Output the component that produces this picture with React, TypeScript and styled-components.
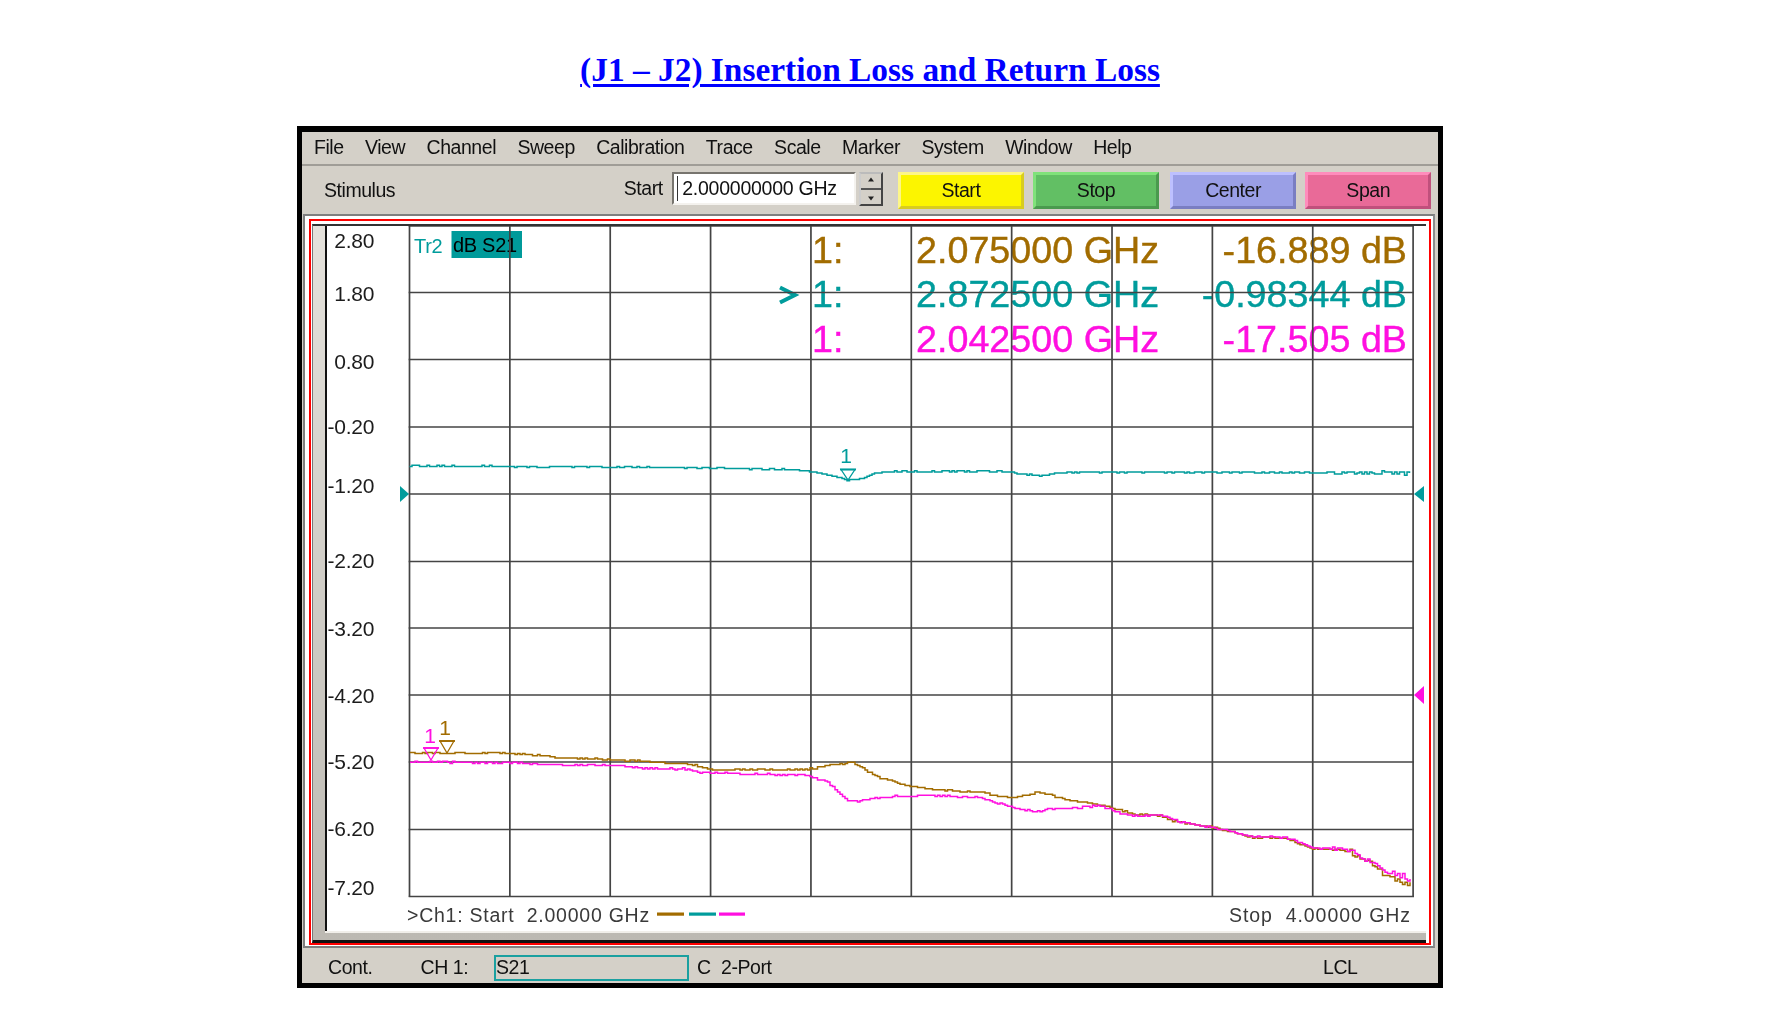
import styled, { createGlobalStyle } from 'styled-components';

const GlobalStyle = createGlobalStyle`
  html, body {
    margin: 0;
    padding: 0;
    background: #fff;
  }
  body {
    font-family: 'Liberation Sans', Arial, sans-serif;
  }
`;

const BROWN = '#a26c00';
const TEAL = '#009c9c';
const PINK = '#ff0fe0';
const BEIGE = '#d4d0c8';

const Page = styled.div`
  width: 1789px;
  height: 1017px;
  overflow: hidden;
`;

const TitleRow = styled.div`
  height: 126px;
  box-sizing: border-box;
  padding: 50px 0 0 297px;
  width: 1443px;
  text-align: center;
`;

const TitleLink = styled.a`
  font-family: 'Liberation Serif', 'Times New Roman', serif;
  font-weight: bold;
  font-size: 33.4px;
  line-height: 40px;
  color: #0000ff;
  text-decoration: underline;
  text-decoration-thickness: 3px;
  text-underline-offset: 3px;
`;

const Frame = styled.div`
  margin-left: 297px;
  width: 1146px;
  height: 862px;
  box-sizing: border-box;
  border: solid #000;
  border-width: 6px 5.5px 5.5px 5px;
  background: ${BEIGE};
  display: flex;
  flex-direction: column;
  color: #111;
  font-size: 19.5px;
  letter-spacing: -0.45px;
  filter: blur(0.35px);
`;

const MenuBar = styled.div`
  height: 34px;
  flex: none;
  box-sizing: border-box;
  border-bottom: 2px solid #a09d97;
  display: flex;
  align-items: center;
  gap: 21.4px;
  padding: 0 0 2px 12px;
`;

const MenuItem = styled.span`
  line-height: 20px;
`;

const ToolBar = styled.div`
  height: 48px;
  flex: none;
  display: flex;
  align-items: center;
  padding: 0 7px 0 22px;
`;

const StimulusLabel = styled.span`
  width: 300px;
`;

const StartLabel = styled.span`
  width: 48px;
  margin-bottom: 4px;
`;

const SpinInput = styled.div`
  width: 184px;
  height: 33px;
  box-sizing: border-box;
  background: #fff;
  border: 2px solid;
  border-color: #77746e #f4f2ee #f4f2ee #77746e;
  margin-bottom: 3px;
  padding-left: 3px;
  display: flex;
  align-items: center;
  letter-spacing: -0.25px;
`;

const CaretBar = styled.span`
  width: 1.5px;
  height: 25px;
  background: #333;
  margin-right: 4px;
`;

const Spinner = styled.div`
  width: 24px;
  height: 34px;
  margin: 0 15.5px 2px 3px;
  box-sizing: border-box;
  border: 2px solid #444;
  border-top-color: #bbb;
  border-left-color: #ccc;
  background: ${BEIGE};
  display: flex;
  flex-direction: column;
  align-items: center;
  justify-content: space-around;
`;

const SpinDivider = styled.span`
  height: 1.5px;
  width: 100%;
  background: #555;
`;

const SoftKeys = styled.div`
  display: flex;
  gap: 9.5px;
`;

const softKeyTones = {
  yellow: { face: '#fcf500', hi: '#fdf688', lo: '#d8cc20' },
  green: { face: '#62bf64', hi: '#80e27a', lo: '#4a9a4e' },
  blue: { face: '#9a9fe6', hi: '#bdc0ff', lo: '#7a7ec2' },
  pink: { face: '#e96a98', hi: '#ff8cbc', lo: '#c0507c' },
};

const SoftKey = styled.div<{ $tone: keyof typeof softKeyTones; $extra?: number }>`
  width: 125.6px;
  height: 37px;
  box-sizing: border-box;
  margin-left: ${(p) => p.$extra ?? 0}px;
  display: flex;
  align-items: center;
  justify-content: center;
  background: ${(p) => softKeyTones[p.$tone].face};
  border: 3px solid;
  border-color: ${(p) => softKeyTones[p.$tone].hi} ${(p) => softKeyTones[p.$tone].lo}
    ${(p) => softKeyTones[p.$tone].lo} ${(p) => softKeyTones[p.$tone].hi};
`;

// the nested frames round the trace window: grey bevel, red active line, beige band
const PlotBevel = styled.div`
  flex: 1;
  margin: 0 3px 1px 1px;
  box-sizing: border-box;
  border: 2px solid #7f7f7f;
  border-right-color: #8c8c8c;
  background: #fff;
  padding: 3px 2px 1px 4px;
  display: flex;
`;

const ActiveLine = styled.div`
  flex: 1;
  box-sizing: border-box;
  border: 2px solid #f00;
  border-left-width: 2.5px;
  padding: 3px 3px 0 1px;
  display: flex;
`;

const WindowBand = styled.div`
  flex: 1;
  box-sizing: border-box;
  border-top: 2px solid #333;
  border-bottom: 3px solid #111;
  border-left: 1px solid #777;
  background: linear-gradient(#e4e1db, #bcb9b2);
  padding: 0 0 9px 11.5px;
  display: flex;
`;

const PlotArea = styled.div`
  flex: 1;
  border-left: 2px solid #111;
  background: #fff;
  box-shadow: 0 2px 0 #f1efea;
  line-height: 0;
`;

const StatusBar = styled.div`
  height: 34px;
  flex: none;
  box-sizing: border-box;
  display: flex;
  align-items: center;
  padding: 3px 0 0 26px;
`;

const StatusText = styled.span<{ $width: number }>`
  width: ${(p) => p.$width}px;
  flex: none;
`;

const ParamBox = styled.div`
  width: 195px;
  height: 26px;
  flex: none;
  box-sizing: border-box;
  border: 2px solid #1aa0a0;
  margin-right: 8px;
  display: flex;
  align-items: center;
`;

const AxisText = styled.text`
  font-size: 21px;
  letter-spacing: -0.2px;
  fill: #1c1c1c;
  text-anchor: end;
`;

const TrLabel = styled.text`
  font-size: 20px;
  letter-spacing: -0.3px;
  fill: ${TEAL};
`;

const TrHighlight = styled.text`
  font-size: 20px;
  letter-spacing: -0.3px;
  fill: #000;
`;

const Readout = styled.text<{ $color: string; $end?: boolean }>`
  font-size: 37.7px;
  letter-spacing: 0;
  fill: ${(p) => p.$color};
  stroke: ${(p) => p.$color};
  stroke-width: 0.4px;
  text-anchor: ${(p) => (p.$end ? 'end' : 'start')};
`;

const FootText = styled.text<{ $end?: boolean }>`
  font-size: 19.5px;
  letter-spacing: ${(p) => (p.$end ? 0.95 : 0.75)}px;
  white-space: pre;
  fill: #3a3a3a;
  text-anchor: ${(p) => (p.$end ? 'end' : 'start')};
`;

const MarkerDigit = styled.text<{ $color: string }>`
  font-size: 21px;
  letter-spacing: 0;
  fill: ${(p) => p.$color};
  text-anchor: middle;
`;

type Pt = [number, number];

const tealPts: Pt[] = [
  [409.5, 466], [576, 466.7], [697.5, 467.7], [792, 469.7], [812, 471.7], [833, 476], [846, 480],
  [860, 479], [873, 474], [887, 471.3], [1002, 471.3], [1025, 474.3], [1042, 475.7], [1059, 473.3],
  [1076, 472], [1211, 472.3], [1411, 473],
];

const brownPts: Pt[] = [
  [410, 753.3], [510, 753.3], [559, 757.7], [636.6, 760.7], [690.7, 764.3], [711, 770], [805.7, 769.3],
  [836, 764.3], [853, 762.7], [876.7, 776.7], [907, 786], [930, 789.3], [984, 792.7], [991, 795],
  [1014.5, 797.7], [1038, 792.3], [1065, 799.3], [1102, 805], [1133, 814], [1160, 816], [1173, 821],
  [1214, 827.7], [1251, 837.3], [1285, 838.3], [1312, 848.3], [1349, 850.7], [1369.5, 863.3],
  [1383, 873.3], [1400, 882.7], [1412, 883.3],
];

const pinkPts: Pt[] = [
  [410, 762], [511.6, 762.7], [552, 765], [620, 765.7], [643.4, 768.3], [684, 769], [697.5, 772.7],
  [805.7, 775], [826, 781.7], [846, 799.3], [856.4, 801.7], [870, 798.3], [900, 796], [930, 795.3],
  [980.7, 797.7], [991, 801.7], [1014.5, 807.7], [1035, 811.7], [1048, 809], [1079, 807.7], [1099, 805.7],
  [1119, 812.7], [1133, 816], [1160, 815], [1180, 821.7], [1214, 827.7], [1251, 836.7], [1285, 837.3],
  [1312, 847.7], [1349, 850], [1369.5, 861.7], [1383, 871.7], [1396.5, 874.3], [1412, 880],
];

// turns the picked points into a stepped, slightly noisy analyzer trace
const tracePath = (pts: Pt[], seed: number, noise: number) => {
  let d = '';
  let seg = 0;
  for (let x = pts[0][0]; x <= pts[pts.length - 1][0]; x += 2.5) {
    while (seg < pts.length - 2 && x > pts[seg + 1][0]) seg++;
    const [x0, y0] = pts[seg];
    const [x1, y1] = pts[seg + 1];
    const base = y0 + ((y1 - y0) * (x - x0)) / (x1 - x0);
    const r = Math.sin(x * 12.9898 + seed) * 43758.5453;
    const rand = r - Math.floor(r) - 0.5;
    const amp = x > 1330 ? noise * 3.5 : noise;
    const y = Math.round((base + rand * amp) / 1.1) * 1.1;
    d += d ? `H${x.toFixed(1)}V${y.toFixed(1)}` : `M${x.toFixed(1)} ${y.toFixed(1)}`;
  }
  return d;
};

const verticals = Array.from({ length: 11 }, (_, i) => 409.5 + i * 100.36);
const horizontals = [226, 292.5, 359.5, 427, 494, 561.5, 628, 695, 762, 829.5, 896.5];

const axisLabels: [string, number][] = [
  ['2.80', 248], ['1.80', 300.5], ['0.80', 368.5], ['-0.20', 434], ['-1.20', 492.5], ['-2.20', 567.5],
  ['-3.20', 635.5], ['-4.20', 702.5], ['-5.20', 768.5], ['-6.20', 836], ['-7.20', 895],
];

const menuNames = ['File', 'View', 'Channel', 'Sweep', 'Calibration', 'Trace', 'Scale', 'Marker', 'System', 'Window', 'Help'];

const Marker = ({ x, top, tip, color, digitY, digitX }: { x: number; top: number; tip: number; color: string; digitY: number; digitX: number }) => (
  <g>
    <MarkerDigit x={digitX} y={digitY} $color={color}>1</MarkerDigit>
    <polygon points={`${x - 7},${top} ${x + 7},${top} ${x},${tip}`} fill="none" stroke={color} strokeWidth={1.3} />
    <line x1={x - 8} x2={x + 8} y1={top} y2={top} stroke={color} strokeWidth={1.8} />
  </g>
);

const App = () => {
  return (
    <Page>
      <GlobalStyle />
      <TitleRow>
        <TitleLink>(J1 – J2) Insertion Loss and Return Loss</TitleLink>
      </TitleRow>
      <Frame>
        <MenuBar>
          {menuNames.map((m) => (
            <MenuItem key={m}>{m}</MenuItem>
          ))}
        </MenuBar>
        <ToolBar>
          <StimulusLabel>Stimulus</StimulusLabel>
          <StartLabel>Start</StartLabel>
          <SpinInput>
            <CaretBar />
            2.000000000 GHz
          </SpinInput>
          <Spinner>
            <svg width="8" height="5" viewBox="0 0 8 5"><path d="M4 0.5 7 4.5H1Z" fill="#222" /></svg>
            <SpinDivider />
            <svg width="8" height="5" viewBox="0 0 8 5"><path d="M4 4.5 7 0.5H1Z" fill="#222" /></svg>
          </Spinner>
          <SoftKeys>
            <SoftKey $tone="yellow">Start</SoftKey>
            <SoftKey $tone="green">Stop</SoftKey>
            <SoftKey $tone="blue" $extra={2}>Center</SoftKey>
            <SoftKey $tone="pink">Span</SoftKey>
          </SoftKeys>
        </ToolBar>
        <PlotBevel>
          <ActiveLine>
            <WindowBand>
              <PlotArea>
                {/* viewBox is in page pixels so the trace points stay readable */}
                <svg width="1098" height="704" viewBox="327 226 1098 704">
                  {axisLabels.map(([t, y]) => (
                    <AxisText key={t} x={374.3} y={y}>{t}</AxisText>
                  ))}
                  <TrLabel x={414} y={253}>Tr2</TrLabel>
                  <rect x={451.5} y={231} width={70.5} height={27} fill="#009a9a" />
                  <TrHighlight x={453} y={252}>dB S21</TrHighlight>

                  <Readout x={812} y={263} $color={BROWN}>1:</Readout>
                  <Readout x={916} y={263} $color={BROWN}>2.075000 GHz</Readout>
                  <Readout x={1407} y={263} $color={BROWN} $end>-16.889 dB</Readout>
                  <path d="M780 287.5 795 295 780 302.5" fill="none" stroke={TEAL} strokeWidth={4} />
                  <Readout x={812} y={307} $color={TEAL}>1:</Readout>
                  <Readout x={916} y={307} $color={TEAL}>2.872500 GHz</Readout>
                  <Readout x={1407} y={307} $color={TEAL} $end>-0.98344 dB</Readout>
                  <Readout x={812} y={352} $color={PINK}>1:</Readout>
                  <Readout x={916} y={352} $color={PINK}>2.042500 GHz</Readout>
                  <Readout x={1407} y={352} $color={PINK} $end>-17.505 dB</Readout>

                  {verticals.map((x) => (
                    <line key={x} x1={x} x2={x} y1={226} y2={896.8} stroke="#444" strokeWidth={1.7} />
                  ))}
                  {horizontals.map((y) => (
                    <line key={y} x1={408.7} x2={1414} y1={y} y2={y} stroke="#444" strokeWidth={1.7} />
                  ))}

                  <path d={tracePath(tealPts, 1.3, 1.1)} fill="none" stroke={TEAL} strokeWidth={1.5} />
                  <path d={tracePath(brownPts, 2.7, 1.5)} fill="none" stroke={BROWN} strokeWidth={1.5} />
                  <path d={tracePath(pinkPts, 4.1, 1.5)} fill="none" stroke={PINK} strokeWidth={1.5} />

                  <Marker x={848} top={469.5} tip={480} color={TEAL} digitX={846} digitY={463} />
                  <Marker x={447} top={741} tip={753} color={BROWN} digitX={445} digitY={735} />
                  <Marker x={431} top={748} tip={760} color={PINK} digitX={430} digitY={743} />

                  <polygon points="400,486 409,494 400,502" fill={TEAL} />
                  <polygon points="1424,486 1414,494 1424,502" fill={TEAL} />
                  <polygon points="1424,686 1414,695 1424,704" fill={PINK} />

                  <FootText x={407} y={921.5}>&gt;Ch1: Start  2.00000 GHz</FootText>
                  <rect x={657} y={912.5} width={27} height={3.2} fill={BROWN} />
                  <rect x={689} y={912.5} width={27} height={3.2} fill={TEAL} />
                  <rect x={719} y={912.5} width={26} height={3.2} fill={PINK} />
                  <FootText x={1411} y={921.5} $end>Stop  4.00000 GHz</FootText>
                </svg>
              </PlotArea>
            </WindowBand>
          </ActiveLine>
        </PlotBevel>
        <StatusBar>
          <StatusText $width={92.5}>Cont.</StatusText>
          <StatusText $width={73.5}>CH 1:</StatusText>
          <ParamBox>S21</ParamBox>
          <StatusText $width={24}>C</StatusText>
          <StatusText $width={602}>2-Port</StatusText>
          <StatusText $width={50}>LCL</StatusText>
        </StatusBar>
      </Frame>
    </Page>
  );
};

export default App;
